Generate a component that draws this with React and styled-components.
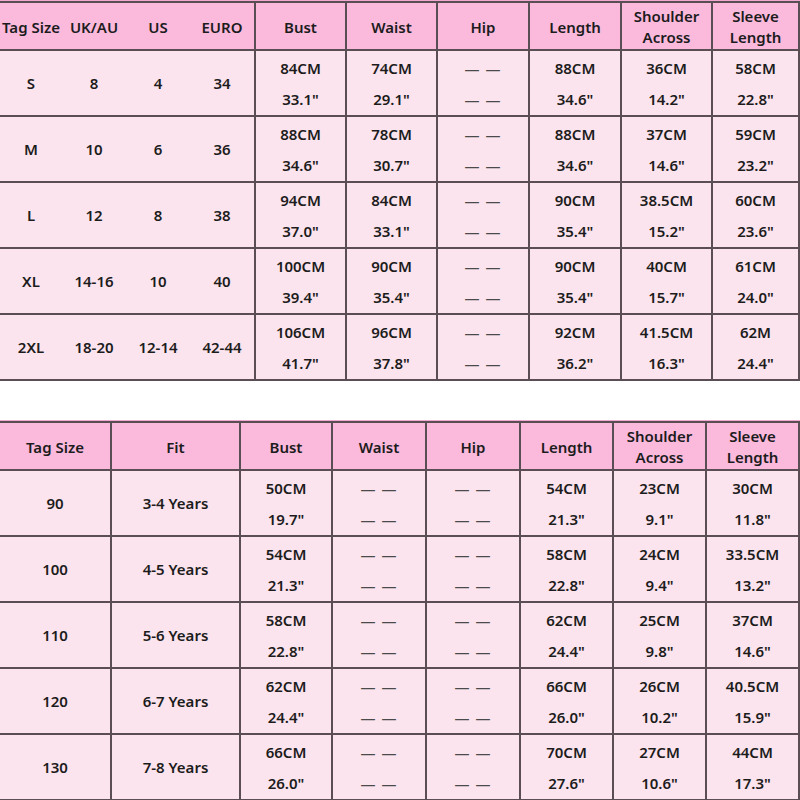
import React from 'react';
import styled, { createGlobalStyle } from 'styled-components';

const GlobalStyle = createGlobalStyle`
  html, body {
    margin: 0;
    padding: 0;
    background: #fff;
  }
  body {
    font-family: "Noto Sans", "Liberation Sans", Arial, sans-serif;
    color: #1c1c1c;
  }
`;

const adultCols = [62, 64, 64, 66, 91, 91, 92, 92, 91, 87];
const kidCols = [112, 129, 92, 94, 94, 93, 93, 93];

const adultHead = ['Tag Size', 'UK/AU', 'US', 'EURO', 'Bust', 'Waist', 'Hip', 'Length', ['Shoulder', 'Across'], ['Sleeve', 'Length']];
const kidHead = ['Tag Size', 'Fit', 'Bust', 'Waist', 'Hip', 'Length', ['Shoulder', 'Across'], ['Sleeve', 'Length']];

const DASH = '— —';

const adultRows = [
  { fixed: ['S', '8', '4', '34'], pairs: [['84CM', '33.1"'], ['74CM', '29.1"'], [DASH, DASH], ['88CM', '34.6"'], ['36CM', '14.2"'], ['58CM', '22.8"']] },
  { fixed: ['M', '10', '6', '36'], pairs: [['88CM', '34.6"'], ['78CM', '30.7"'], [DASH, DASH], ['88CM', '34.6"'], ['37CM', '14.6"'], ['59CM', '23.2"']] },
  { fixed: ['L', '12', '8', '38'], pairs: [['94CM', '37.0"'], ['84CM', '33.1"'], [DASH, DASH], ['90CM', '35.4"'], ['38.5CM', '15.2"'], ['60CM', '23.6"']] },
  { fixed: ['XL', '14-16', '10', '40'], pairs: [['100CM', '39.4"'], ['90CM', '35.4"'], [DASH, DASH], ['90CM', '35.4"'], ['40CM', '15.7"'], ['61CM', '24.0"']] },
  { fixed: ['2XL', '18-20', '12-14', '42-44'], pairs: [['106CM', '41.7"'], ['96CM', '37.8"'], [DASH, DASH], ['92CM', '36.2"'], ['41.5CM', '16.3"'], ['62M', '24.4"']] },
];

const kidRows = [
  { fixed: ['90', '3-4 Years'], pairs: [['50CM', '19.7"'], [DASH, DASH], [DASH, DASH], ['54CM', '21.3"'], ['23CM', '9.1"'], ['30CM', '11.8"']] },
  { fixed: ['100', '4-5 Years'], pairs: [['54CM', '21.3"'], [DASH, DASH], [DASH, DASH], ['58CM', '22.8"'], ['24CM', '9.4"'], ['33.5CM', '13.2"']] },
  { fixed: ['110', '5-6 Years'], pairs: [['58CM', '22.8"'], [DASH, DASH], [DASH, DASH], ['62CM', '24.4"'], ['25CM', '9.8"'], ['37CM', '14.6"']] },
  { fixed: ['120', '6-7 Years'], pairs: [['62CM', '24.4"'], [DASH, DASH], [DASH, DASH], ['66CM', '26.0"'], ['26CM', '10.2"'], ['40.5CM', '15.9"']] },
  { fixed: ['130', '7-8 Years'], pairs: [['66CM', '26.0"'], [DASH, DASH], [DASH, DASH], ['70CM', '27.6"'], ['27CM', '10.6"'], ['44CM', '17.3"']] },
];

const SizeChart = ({ cols, head, rows, plainCols }) => (
  <Chart $cols={cols}>
    {head.map((h, i) => (
      <HeadCell key={'h' + i} $line={i >= plainCols - 1}>
        {Array.isArray(h) ? h.map(t => <HeadLine key={t}>{t}</HeadLine>) : h}
      </HeadCell>
    ))}
    {rows.map((row, r) => (
      <React.Fragment key={r}>
        {row.fixed.map((v, i) => (
          <Cell key={'f' + i} $line={i >= plainCols - 1}>{v}</Cell>
        ))}
        {row.pairs.map((p, i) => (
          <Cell key={'p' + i} $line>
            <Stack>
              {p.map((v, k) => <Value key={k} $dash={v === DASH}>{v}</Value>)}
            </Stack>
          </Cell>
        ))}
      </React.Fragment>
    ))}
  </Chart>
);

const App = () => (
  <Page>
    <GlobalStyle />
    <SizeChart cols={adultCols} head={adultHead} rows={adultRows} plainCols={4} />
    <Gap />
    <SizeChart cols={kidCols} head={kidHead} rows={kidRows} plainCols={1} />
  </Page>
);

export default App;

const Page = styled.div`
  width: 800px;
  height: 800px;
  overflow: hidden;
  padding-top: 1px;
  box-sizing: border-box;
`;

const Gap = styled.div`
  height: 40px;
`;

const Chart = styled.div`
  display: grid;
  grid-template-columns: ${p => p.$cols.map(c => c + 'px').join(' ')};
  grid-auto-rows: 66px;
  grid-template-rows: 48px;
  border-top: 2px solid #5a4d53;
  box-shadow: 0 -1px 0 #f3a9cf;
  background: #fce4ee;
`;

const Cell = styled.div`
  display: flex;
  align-items: center;
  justify-content: center;
  box-sizing: border-box;
  border-bottom: 2px solid #5a4d53;
  border-right: ${p => (p.$line ? '2px solid #5a4d53' : 'none')};
  font-size: 15px;
  font-weight: 600;
  color: #1c1c1c;
  text-align: center;
  white-space: nowrap;
`;

const HeadCell = styled(Cell)`
  flex-direction: column;
  padding-top: 2px;
  background: #fbb9dc;
  line-height: 21px;
`;

const HeadLine = styled.span`
  display: block;
`;

const Stack = styled.div`
  display: flex;
  flex-direction: column;
  width: 100%;
  height: 100%;
  padding-top: 1px;
  box-sizing: border-box;
`;

const Value = styled.span`
  flex: 1;
  display: flex;
  align-items: center;
  justify-content: center;
  color: ${p => (p.$dash ? '#4a4a4a' : '#1c1c1c')};
  letter-spacing: ${p => (p.$dash ? '1px' : '0')};
`;
